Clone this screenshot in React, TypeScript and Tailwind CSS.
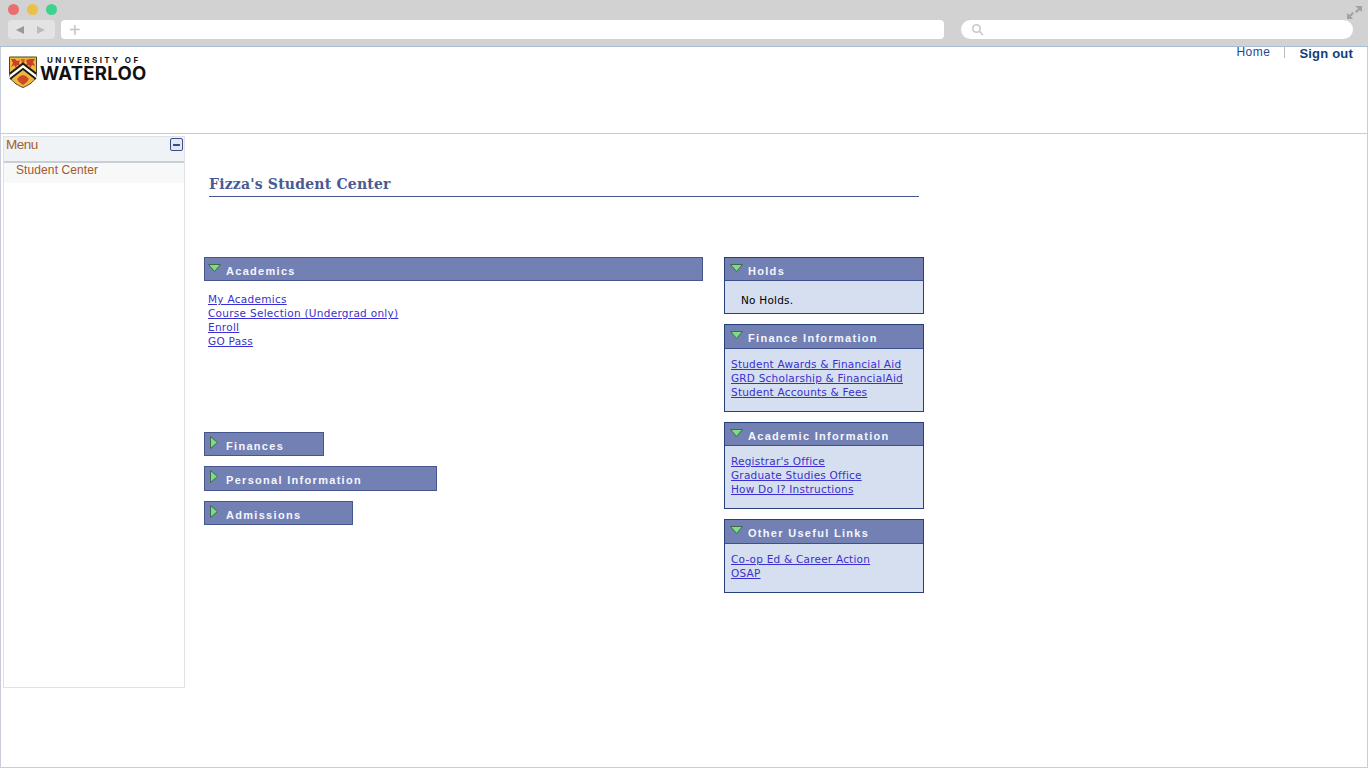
const verdana = "font-['DejaVu_Sans',sans-serif]";

const Crest = () => (
  <svg width="28" height="32" viewBox="0 0 28 32">
    <path d="M0.5 1H27.5V17C27.5 25 20 29 14 31.5C8 29 0.5 25 0.5 17Z" fill="#eeb93a" stroke="#4a4430" strokeWidth="1" />
    <path d="M2 3L6 3L8 5L11 4L10 7L11 10L8 9L7 12L5 9L2 11L4 7ZM17 4L21 3L26 3L24 6L26 10L23 9L21 12L20 9L17 10L18 7Z" fill="#c9402a" />
    <path d="M12 3H16L15 8L14 10L13 8Z" fill="#d9602a" />
    <path d="M1 19L14 9L27 19V24L14 14L1 24Z" fill="#fff" />
    <path d="M1 17.5L14 7.5L27 17.5M1 23L14 13L27 23" fill="none" stroke="#1a1a1a" strokeWidth="1.8" />
    <path d="M8 23L11 20L14 19L17 20L20 23L18 26L14 29L10 26Z" fill="#cc4a2a" />
  </svg>
);

const ArrowDown = () => (
  <svg width="13" height="8" viewBox="0 0 13 8" className="shrink-0">
    <path d="M0.5 0.5H12.5L6.5 7.5Z" fill="#7fdc86" stroke="#3d6b4a" strokeWidth="1" />
  </svg>
);

const ArrowRight = () => (
  <svg width="8" height="13" viewBox="0 0 8 13" className="shrink-0">
    <path d="M0.5 0.5V12.5L7.5 6.5Z" fill="#7fdc86" stroke="#3d6b4a" strokeWidth="1" />
  </svg>
);

const Links = ({ items, tight }: { items: string[]; tight?: boolean }) => (
  <div className="flex flex-col">
    {items.map((item) => (
      <a
        key={item}
        href="#"
        className={`h-[14px] w-fit text-[10.5px] leading-[14px] text-[#3a2fd0] underline ${tight ? "tracking-[0.22px]" : "tracking-[0.28px]"} ${verdana}`}
      >
        {item}
      </a>
    ))}
  </div>
);

// box=true: the right column panels sit 2px further in than the left bars
const Title = ({ children, box }: { children: string; box?: boolean }) => (
  <div className="flex items-start">
    <div className={`${box ? "w-[23px] pl-[5px]" : "w-[21px] pl-[3px]"} pt-[6px]`}>
      <ArrowDown />
    </div>
    <span className="pt-[6px] text-[11px] leading-[14px] font-bold tracking-[1.3px] text-[#f4f6ff]">
      {children}
    </span>
  </div>
);

const ClosedTitle = ({ children }: { children: string }) => (
  <div className="flex items-start">
    <div className="w-[21px] pl-[5px] pt-[3px]">
      <ArrowRight />
    </div>
    <span className="pt-[6px] text-[11px] leading-[14px] font-bold tracking-[1.3px] text-[#f4f6ff]">
      {children}
    </span>
  </div>
);

const LeftBar = ({ title, width }: { title: string; width: string }) => (
  <div className={`border border-[#47568f] bg-[#7280b4] ${width}`}>
    <ClosedTitle>{title}</ClosedTitle>
  </div>
);

const Box = ({
  title,
  items,
  height,
  headerHeight,
}: {
  title: string;
  items: string[];
  height: string;
  headerHeight: string;
}) => (
  <div className={`border border-[#27407a] bg-[#d6dfef] ${height}`}>
    <div className={`border-b border-[#3e4f8e] bg-[#7280b4] ${headerHeight}`}>
      <Title box>{title}</Title>
    </div>
    <div className="pt-[8px] pl-[6px]">
      <Links items={items} tight />
    </div>
  </div>
);

export default function App() {
  return (
    <div className="flex h-[768px] w-[1368px] flex-col overflow-hidden bg-white font-['Liberation_Sans',sans-serif]">
      {/* browser chrome */}
      <div className="h-[47px] border-b border-[#a9bdd6] bg-[#d2d2d2]">
        <div className="flex h-[18px] items-center justify-between pr-[6px] pl-[8px]">
          <div className="flex gap-[8px]">
            <span className="size-[11px] rounded-full bg-[#ec6d6d]" />
            <span className="size-[11px] rounded-full bg-[#e8c14a]" />
            <span className="size-[11px] rounded-full bg-[#3ad48c]" />
          </div>
          <svg width="15" height="13" viewBox="0 0 15 13" className="mt-[6px]">
            <path d="M8 0H15V6L12.8 3.9L9.5 7L8 5.6L11.2 2.4ZM0 13V7L2.2 9.1L5.5 6L7 7.4L3.8 10.6L6 13Z" fill="#a2a2a2" />
          </svg>
        </div>
        <div className="flex items-center pt-[2px] pl-[8px]">
          <div className="flex h-[19px] w-[47px] items-center gap-[13px] rounded-[4px] bg-[#e3e3e3] pl-[8px]">
            <span className="h-0 w-0 border-y-[4px] border-r-[8px] border-y-transparent border-r-[#999]" />
            <span className="h-0 w-0 border-y-[4px] border-l-[8px] border-y-transparent border-l-[#bbb]" />
          </div>
          <div className="ml-[6px] flex h-[19px] w-[883px] items-center rounded-[4px] bg-white pl-[8px]">
            <span className="text-[20px] leading-none text-[#c4c4c4]">+</span>
          </div>
          <div className="ml-[17px] flex h-[19px] w-[392px] items-center rounded-full bg-white pl-[10px]">
            <svg width="13" height="13" viewBox="0 0 13 13" fill="none" stroke="#c8c8c8" strokeWidth="1.6">
              <circle cx="5.5" cy="5.5" r="3.7" />
              <path d="M8.5 8.5L12 12" />
            </svg>
          </div>
        </div>
      </div>

      {/* page */}
      <div className="flex min-h-0 flex-1 flex-col border-x border-b border-[#c9ced6]">
        <header className="flex h-[87px] shrink-0 items-start justify-between border-b border-[#c9ced6]">
          <div className="flex items-start pt-[9px] pl-[8px]">
            <Crest />
            <div className="ml-[3px] flex flex-col">
              <span className="pl-[7px] font-['Inter',sans-serif] text-[8px] leading-[9px] font-bold tracking-[2.45px] text-[#111]">UNIVERSITY OF</span>
              <span className="font-['Inter',sans-serif] text-[18.5px] leading-[16px] font-bold tracking-[0.3px] text-[#111]">WATERLOO</span>
            </div>
          </div>
          <div className="flex items-start pr-[14px]">
            <a className="text-[12px] leading-[11px] tracking-[0.5px] text-[#174a96]" href="#">Home</a>
            <span className="mx-[14px] h-[11px] w-px bg-[#b4bcc8]" />
            <a className="text-[13px] leading-[14px] font-bold tracking-[0.2px] text-[#0e3f7c]" href="#">Sign out</a>
          </div>
        </header>

        <div className="flex min-h-0 flex-1 pt-[2px] pl-[2px]">
          {/* menu */}
          <aside className="h-[552px] w-[182px] shrink-0 border border-[#dfe2e6]">
            <div className="flex h-[26px] items-start justify-between border-b-2 border-[#c8ced6] bg-[#eff3f5] pr-[1px] pl-[2px]">
              <span className="text-[13.5px] leading-[16px] tracking-[-0.5px] text-[#a8602a]">Menu</span>
              <span className="mt-[1px] flex size-[13px] items-center justify-center rounded-[2px] border border-[#3c4c86] bg-[#e3e8f2]">
                <span className="h-[2px] w-[7px] bg-[#3c4c86]" />
              </span>
            </div>
            <div className="h-[20px] bg-[#f7f8f8] pl-[12px] text-[12px] leading-[15px] tracking-[0.1px] text-[#a6562b]">Student Center</div>
          </aside>

          {/* content */}
          <main className="pl-[19px]">
            <div className="mt-[39px] ml-[5px] h-[22px] w-[710px] border-b border-[#47568f] pt-[1px] font-['DejaVu_Serif',serif] text-[14px] leading-[17px] font-bold tracking-[0.2px] text-[#4a5a92]">
              Fizza's Student Center
            </div>
            <div className="mt-[60px] flex items-start gap-[21px]">
              <div className="flex w-[499px] flex-col">
                <div className="h-[24px] border border-[#47568f] bg-[#7280b4]">
                  <Title>Academics</Title>
                </div>
                <div className="h-[151px] pt-[11px] pl-[4px]">
                  <Links items={["My Academics", "Course Selection (Undergrad only)", "Enroll", "GO Pass"]} />
                </div>
                <LeftBar title="Finances" width="h-[24px] w-[120px]" />
                <div className="h-[10px]" />
                <LeftBar title="Personal Information" width="h-[25px] w-[233px]" />
                <div className="h-[10px]" />
                <LeftBar title="Admissions" width="h-[24px] w-[149px]" />
              </div>
              <div className="flex w-[200px] flex-col gap-[10px]">
                <div className="h-[57px] border border-[#27407a] bg-[#d6dfef]">
                  <div className="h-[23px] border-b border-[#3e4f8e] bg-[#7280b4]">
                    <Title box>Holds</Title>
                  </div>
                  <p className={`pt-[12px] pl-[16px] text-[10.5px] leading-[14px] tracking-[0.22px] text-black ${verdana}`}>No Holds.</p>
                </div>
                <Box title="Finance Information" height="h-[88px]" headerHeight="h-[24px]" items={["Student Awards & Financial Aid", "GRD Scholarship & FinancialAid", "Student Accounts & Fees"]} />
                <Box title="Academic Information" height="h-[87px]" headerHeight="h-[23px]" items={["Registrar's Office", "Graduate Studies Office", "How Do I? Instructions"]} />
                <Box title="Other Useful Links" height="h-[74px]" headerHeight="h-[24px]" items={["Co-op Ed & Career Action", "OSAP"]} />
              </div>
            </div>
          </main>
        </div>
      </div>
    </div>
  );
}
